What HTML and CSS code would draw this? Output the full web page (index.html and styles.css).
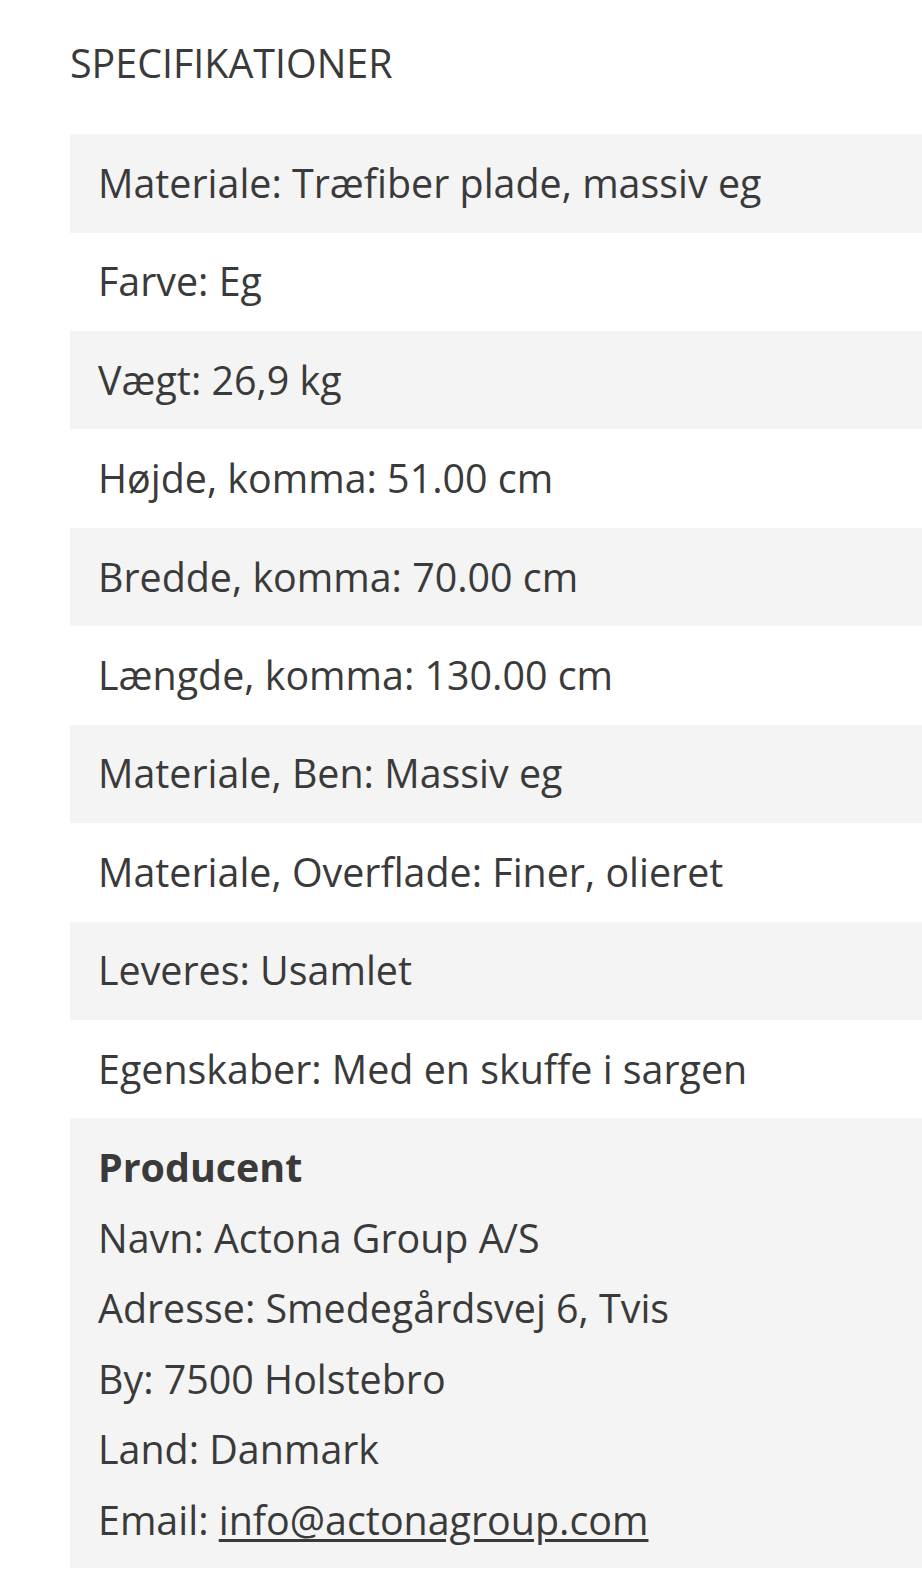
FILE: index.html
```html
<!DOCTYPE html>
<html lang="da">
<head>
<meta charset="utf-8">
<title>Specifikationer</title>
<link rel="stylesheet" href="styles.css">
</head>
<body>
<section class="specs">
  <h2 class="specs-title">SPECIFIKATIONER</h2>
  <ul class="spec-list">
    <li class="spec-row">Materiale: Træfiber plade, massiv eg</li>
    <li class="spec-row">Farve: Eg</li>
    <li class="spec-row">Vægt: 26,9 kg</li>
    <li class="spec-row">Højde, komma: 51.00 cm</li>
    <li class="spec-row">Bredde, komma: 70.00 cm</li>
    <li class="spec-row">Længde, komma: 130.00 cm</li>
    <li class="spec-row">Materiale, Ben: Massiv eg</li>
    <li class="spec-row">Materiale, Overflade: Finer, olieret</li>
    <li class="spec-row">Leveres: Usamlet</li>
    <li class="spec-row">Egenskaber: Med en skuffe i sargen</li>
    <li class="spec-row producer">
      <div class="producer-line producer-title">Producent</div>
      <div class="producer-line">Navn: Actona Group A/S</div>
      <div class="producer-line">Adresse: Smedegårdsvej 6, Tvis</div>
      <div class="producer-line">By: 7500 Holstebro</div>
      <div class="producer-line">Land: Danmark</div>
      <div class="producer-line">Email: <a class="mail" href="mailto:info@actonagroup.com">info@actonagroup.com</a></div>
    </li>
  </ul>
</section>
</body>
</html>
```

FILE: styles.css
```css
html, body {
  margin: 0;
  padding: 0;
  background: #ffffff;
}

body {
  font-family: "Open Sans", "Liberation Sans", sans-serif;
  color: #3a3a3a;
}

.specs {
  padding: 37px 0 0 70px;
}

.specs-title {
  margin: 0 0 43.5px 0;
  font-size: 39.4px;
  font-weight: 400;
  line-height: 1.362;
  color: #3a3a3a;
}

.spec-list {
  list-style: none;
  margin: 0;
  padding: 0;
}

.spec-row {
  font-size: 39.4px;
  line-height: 1.6;
  padding: 17.7px 28px;
  background: #ffffff;
}

.spec-row:nth-child(odd) {
  background: #f4f4f4;
}

.producer {
  padding: 14px 28px 13px;
}

.producer-line {
  line-height: 70.5px;
}

.producer-title {
  font-weight: 700;
}

.mail {
  color: #3a3a3a;
  text-decoration: underline;
  text-underline-offset: 4px;
}
```
